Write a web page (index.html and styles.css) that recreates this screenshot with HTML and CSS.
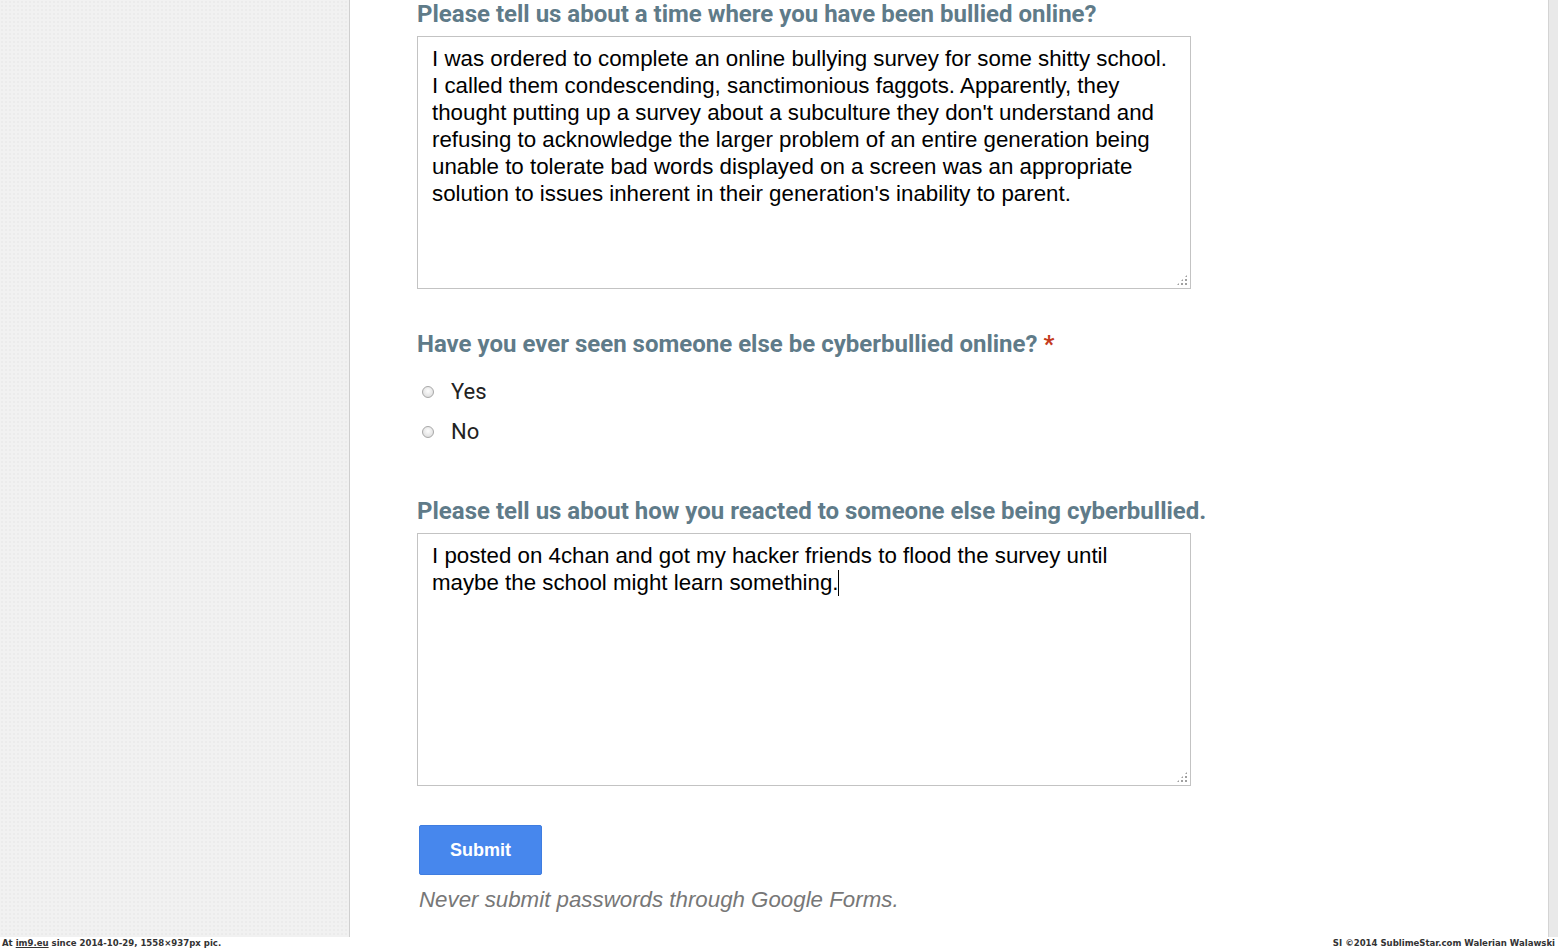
FILE: index.html
```html
<!DOCTYPE html>
<html lang="en">
<head>
    <meta charset="UTF-8">
    <title>Cyberbullying survey</title>
    <link rel="stylesheet" href="styles.css">
</head>
<body>
    <div id="page">
        <div id="bgLeft"></div>
        <div id="panel">
            <div class="question">
                <h3 class="qTitle">Please tell us about a time where you have been bullied online?</h3>
                <div class="answerBox">
                    <textarea class="answer">I was ordered to complete an online bullying survey for some shitty school.
I called them condescending, sanctimonious faggots. Apparently, they
thought putting up a survey about a subculture they don't understand and
refusing to acknowledge the larger problem of an entire generation being
unable to tolerate bad words displayed on a screen was an appropriate
solution to issues inherent in their generation's inability to parent.</textarea>
                </div>
            </div>

            <div class="question radios">
                <h3 class="qTitle">Have you ever seen someone else be cyberbullied online? <span class="required">*</span></h3>
                <label class="choice"><input type="radio" name="seen"> <span>Yes</span></label>
                <label class="choice"><input type="radio" name="seen"> <span>No</span></label>
            </div>

            <div class="question last">
                <h3 class="qTitle">Please tell us about how you reacted to someone else being cyberbullied.</h3>
                <div class="answerBox">
                    <textarea class="answer">I posted on 4chan and got my hacker friends to flood the survey until
maybe the school might learn something.</textarea>
                    <span class="caret"></span>
                </div>
            </div>

            <button id="submitBtn">Submit</button>
            <p id="warning">Never submit passwords through Google Forms.</p>
        </div>
        <div id="bgRight"></div>
    </div>
    <div id="credits">
        <span>At <u>im9.eu</u> since 2014-10-29, 1558×937px pic.</span>
        <span>SI ©2014 SublimeStar.com Walerian Walawski</span>
    </div>
</body>
</html>
```

FILE: styles.css
```css
body { margin: 0; padding: 0; background: #fff; overflow: hidden; }
#page { display: flex; height: 937px; overflow: hidden; }
#bgLeft {
    width: 349px;
    background: #f1f1f1;
    background-image: radial-gradient(rgba(0,0,0,0.025) 1px, transparent 1px);
    background-size: 4px 4px;
    border-right: 1px solid #cfcfcf;
}
#bgRight {
    width: 9px;
    background: #e9e9e9;
    border-left: 1px solid #d4d4d4;
}

#panel {
    flex: 1;
    background: #fff;
    padding-left: 67px;
}

.qTitle {
    margin: 0;
    font-family: Roboto, "Liberation Sans", sans-serif;
    font-weight: bold;
    font-size: 24px;
    line-height: 28px;
    color: #5f7b89;
}
.required { color: #c43b1d; }

.question { margin-bottom: 41px; }
.radios { margin-bottom: 46px; }
.question.last { margin-bottom: 39px; }

.answerBox {
    position: relative;
    margin-top: 8px;
    width: 774px;
}
/* dotted resize grip */
.answerBox::after {
    content: "";
    position: absolute;
    right: 3px;
    bottom: 3px;
    width: 12px;
    height: 12px;
    background:
        radial-gradient(circle, #a0a0a0 1px, transparent 1.3px) 0 0 / 4px 4px;
    clip-path: polygon(100% 0, 100% 100%, 0 100%);
    pointer-events: none;
}
.caret {
    position: absolute;
    left: 421px;
    top: 37px;
    width: 1px;
    height: 26px;
    background: #000;
}
.answer {
    display: block;
    width: 774px;
    height: 253px;
    box-sizing: border-box;
    padding: 8px 10px 8px 14px;
    border: 1px solid #c3c3c3;
    border-radius: 0;
    resize: none;
    font-family: "Liberation Sans", Arial, sans-serif;
    font-size: 22.3px;
    line-height: 27px;
    color: #000;
    outline: none;
    overflow: hidden;
}

.choice {
    display: flex;
    align-items: center;
    height: 40px;
    font-family: Roboto, "Liberation Sans", sans-serif;
    font-size: 22px;
    color: #222;
}
.choice:first-of-type { margin-top: 13px; }
.choice input {
    appearance: none;
    -webkit-appearance: none;
    width: 12px;
    height: 12px;
    margin: 2px 17px 0 5px;
    border: 1px solid #a8a8a8;
    border-radius: 50%;
    background: radial-gradient(circle at 50% 40%, #fdfdfd 0%, #e2e2e2 70%, #cfcfcf 100%);
    box-sizing: border-box;
}

#submitBtn {
    display: block;
    margin-left: 2px;
    width: 123px;
    height: 50px;
    background: #4787ed;
    border: 1px solid #3f7de0;
    border-radius: 2px;
    color: #fff;
    font-family: "Liberation Sans", Arial, sans-serif;
    font-weight: bold;
    font-size: 18px;
    cursor: pointer;
}
#warning {
    margin: 12px 0 0 2px;
    font-family: "Liberation Sans", Arial, sans-serif;
    font-style: italic;
    font-size: 22.3px;
    line-height: 26px;
    color: #777;
}

#credits {
    display: flex;
    justify-content: space-between;
    height: 12px;
    padding: 0 3px 0 2px;
    font-family: "DejaVu Sans Condensed", "DejaVu Sans", sans-serif;
    font-weight: bold;
    font-size: 9.5px;
    line-height: 12px;
    color: #333;
}
```
